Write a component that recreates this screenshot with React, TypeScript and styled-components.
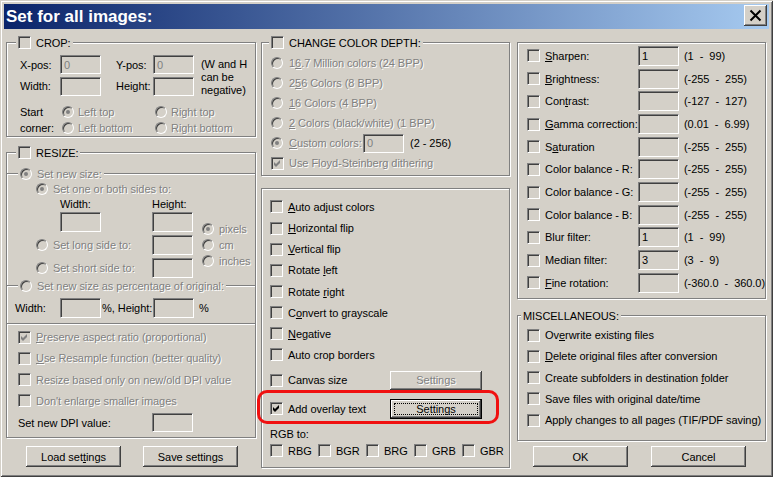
import React from "react";
import styled, { createGlobalStyle } from "styled-components";

const FACE = "#d4d0c8";

const GlobalStyle = createGlobalStyle`
  html, body { margin: 0; padding: 0; background: ${FACE}; }
  body {
    font-family: "Liberation Sans", Arial, sans-serif;
    font-size: 11px;
    letter-spacing: -0.05px;
    color: #000;
  }
  * { box-sizing: border-box; }
`;

const Window = styled.div`
  width: 773px;
  height: 477px;
  padding: 4px;
  background: ${FACE};
  box-shadow: inset 1px 1px 0 ${FACE}, inset -1px -1px 0 #404040,
    inset 2px 2px 0 #fff, inset -2px -2px 0 #808080;
  display: flex;
  flex-direction: column;
  overflow: hidden;
`;

const TitleBar = styled.div`
  height: 25px;
  flex: none;
  display: flex;
  align-items: center;
  justify-content: space-between;
  padding: 0 2px 0 2px;
  background: linear-gradient(to right, #0a246a, #a6caf0);
`;

const Title = styled.div`
  color: #fff;
  font-size: 17px;
  font-weight: bold;
  letter-spacing: 0;
  white-space: nowrap;
`;

const CloseButton = styled.div`
  width: 23px;
  height: 21px;
  align-self: flex-start;
  margin-top: 1px;
  display: flex;
  align-items: center;
  justify-content: center;
  background: ${FACE};
  box-shadow: inset -1px -1px 0 #404040, inset 1px 1px 0 #fff,
    inset -2px -2px 0 #808080;
`;

const Client = styled.div`
  flex: 1;
  display: flex;
  padding: 13px 3px 0 2px;
`;

const Column = styled.div<{ $w: number; $ml?: number }>`
  width: ${(p) => p.$w}px;
  margin-left: ${(p) => p.$ml ?? 0}px;
  flex: none;
  display: flex;
  flex-direction: column;
`;

const Group = styled.div<{ $h: number; $mt?: number }>`
  position: relative;
  height: ${(p) => p.$h}px;
  margin-top: ${(p) => p.$mt ?? 0}px;
  flex: none;
  border: 1px solid #808080;
  box-shadow: inset 1px 1px 0 #fff, 1px 1px 0 #fff;
`;

const Legend = styled.div<{ $left: number }>`
  position: absolute;
  top: -7px;
  left: ${(p) => p.$left}px;
  height: 13px;
  padding: 0 2px;
  display: flex;
  align-items: center;
  gap: 5px;
  background: ${FACE};
  white-space: nowrap;
`;

const Frame = styled.div<{ $h: number; $mt?: number; $closed?: boolean }>`
  position: relative;
  height: ${(p) => p.$h}px;
  margin-top: ${(p) => p.$mt ?? 0}px;
  flex: none;
  border-top: 1px solid #808080;
  border-bottom: ${(p) => (p.$closed ? "1px solid #808080" : "none")};
  box-shadow: inset 0 1px 0 #fff
    ${(p) => (p.$closed ? ", 0 1px 0 #fff" : "")};
`;

const Txt = styled.span<{ $dis?: boolean }>`
  white-space: pre;
  color: ${(p) => (p.$dis ? "#808080" : "#000")};
  text-shadow: ${(p) => (p.$dis ? "1px 1px 0 #fff" : "none")};
`;

const Box = styled.span`
  width: 13px;
  height: 13px;
  flex: none;
  display: inline-flex;
  align-items: center;
  justify-content: center;
  background: ${FACE};
  border: 1px solid;
  border-color: #808080 #fff #fff #808080;
  box-shadow: inset 1px 1px 0 #404040, inset -1px -1px 0 ${FACE};
`;

const Round = styled.span<{ $on?: boolean }>`
  position: relative;
  width: 12px;
  height: 12px;
  flex: none;
  border-radius: 50%;
  background: ${FACE};
  border: 1px solid;
  border-color: #808080 #fff #fff #808080;
  box-shadow: inset 1px 1px 0 #404040;

  &::after {
    content: "";
    display: ${(p) => (p.$on ? "block" : "none")};
    position: absolute;
    left: 3px;
    top: 3px;
    width: 4px;
    height: 4px;
    border-radius: 50%;
    background: #808080;
  }
`;

const Field = styled.div<{ $w?: number; $h?: number; $dis?: boolean }>`
  width: ${(p) => p.$w ?? 41}px;
  height: ${(p) => p.$h ?? 19}px;
  flex: none;
  display: flex;
  align-items: center;
  padding-left: 3px;
  background: ${FACE};
  border: 1px solid;
  border-color: #808080 #fff #fff #808080;
  box-shadow: inset 1px 1px 0 #404040, inset -1px -1px 0 ${FACE};
  color: ${(p) => (p.$dis ? "#808080" : "#000")};
`;

const Opt = styled.div<{ $gap?: number }>`
  display: inline-flex;
  align-items: center;
  gap: ${(p) => p.$gap ?? 5}px;
  white-space: nowrap;
`;

const Stack = styled.div<{ $pt: number; $pl: number }>`
  display: flex;
  flex-direction: column;
  padding: ${(p) => p.$pt}px 0 0 ${(p) => p.$pl}px;
`;

const Line = styled.div<{ $h: number; $pl?: number }>`
  height: ${(p) => p.$h}px;
  flex: none;
  display: flex;
  align-items: center;
  padding-left: ${(p) => p.$pl ?? 0}px;
  white-space: nowrap;
`;

const Label = styled.span<{ $w: number; $pl?: number; $dis?: boolean }>`
  width: ${(p) => p.$w}px;
  padding-left: ${(p) => p.$pl ?? 0}px;
  flex: none;
  white-space: pre;
  color: ${(p) => (p.$dis ? "#808080" : "#000")};
  text-shadow: ${(p) => (p.$dis ? "1px 1px 0 #fff" : "none")};
`;

const Cell = styled.div<{ $c: string; $r: string; $pl?: number }>`
  grid-column: ${(p) => p.$c};
  grid-row: ${(p) => p.$r};
  display: flex;
  align-items: center;
  padding-left: ${(p) => p.$pl ?? 0}px;
  white-space: nowrap;
`;

const Note = styled.div<{ $c: string; $r: string; $lh: number; $mt?: number }>`
  grid-column: ${(p) => p.$c};
  grid-row: ${(p) => p.$r};
  align-self: start;
  margin-top: ${(p) => p.$mt ?? 0}px;
  line-height: ${(p) => p.$lh}px;
  white-space: nowrap;
`;

const CropGrid = styled.div`
  display: grid;
  grid-template-columns: 40px 56px 37px 48px 1fr;
  grid-template-rows: 21px 22px 7px 16px 16px;
  padding: 11px 0 0 13px;
`;

const SizeGrid = styled.div`
  display: grid;
  grid-template-columns: 29px 24px 92px 50px 1fr;
  grid-template-rows: 16px 14px 22px 24px 21px;
  padding-top: 7px;
`;

const UnitList = styled.div`
  grid-column: 5;
  grid-row: 3 / 6;
  display: flex;
  flex-direction: column;
  padding-top: 10px;
`;

const FilterGrid = styled.div`
  display: grid;
  grid-template-columns: 18px 93px 46px 1fr;
  grid-auto-rows: 22.7px;
  align-items: center;
  padding: 1.65px 0 0 9px;
  white-space: pre;
`;

const ButtonRow = styled.div<{ $mt: number; $gap: number; $shift?: number }>`
  margin-top: ${(p) => p.$mt}px;
  display: flex;
  justify-content: center;
  gap: ${(p) => p.$gap}px;
  transform: translateX(${(p) => p.$shift ?? 0}px);
`;

const Btn = styled.div<{ $w: number; $h: number; $default?: boolean; $dis?: boolean }>`
  position: relative;
  width: ${(p) => p.$w}px;
  height: ${(p) => p.$h}px;
  flex: none;
  display: flex;
  align-items: center;
  justify-content: center;
  background: ${FACE};
  color: ${(p) => (p.$dis ? "#808080" : "#000")};
  text-shadow: ${(p) => (p.$dis ? "1px 1px 0 #fff" : "none")};
  white-space: nowrap;
  box-shadow: ${(p) =>
    p.$default
      ? "inset 0 0 0 1px #000, inset -2px -2px 0 #404040, inset 2px 2px 0 #fff, inset -3px -3px 0 #808080"
      : "inset -1px -1px 0 #404040, inset 1px 1px 0 #fff, inset -2px -2px 0 #808080"};

  &::after {
    content: "";
    display: ${(p) => (p.$default ? "block" : "none")};
    position: absolute;
    inset: 4px;
    border: 1px dotted #000;
  }
`;

const RgbItem = styled.div`
  width: 48px;
  flex: none;
  display: flex;
  align-items: center;
  gap: 5px;
`;

const Highlight = styled.div`
  position: absolute;
  left: -5px;
  top: 201px;
  width: 242px;
  height: 34px;
  border: 3px solid #f01010;
  border-radius: 10px;
  pointer-events: none;
`;

const Tick = ({ dis }: { dis?: boolean }) => (
  <svg width="7" height="7" viewBox="0 0 7 7">
    <path d="M0 2 L2 4 L6 0 L6 3 L2 7 L0 5 Z" fill={dis ? "#808080" : "#000"} />
  </svg>
);

const Check = ({ on, dis }: { on?: boolean; dis?: boolean }) => (
  <Box>{on && <Tick dis={dis} />}</Box>
);

const filters: [React.ReactNode, string, string][] = [
  [<><u>S</u>harpen:</>, "1", "(1  -  99)"],
  [<><u>B</u>rightness:</>, "", "(-255  -  255)"],
  [<>Con<u>t</u>rast:</>, "", "(-127  -  127)"],
  [<><u>G</u>amma correction:</>, "", "(0.01  -  6.99)"],
  [<>S<u>a</u>turation</>, "", "(-255  -  255)"],
  [<>Color balance - R:</>, "", "(-255  -  255)"],
  [<>Color balance - G:</>, "", "(-255  -  255)"],
  [<>Color balance - B:</>, "", "(-255  -  255)"],
  [<>Blur filter:</>, "1", "(1  -  99)"],
  [<>Median filter:</>, "3", "(3  -  9)"],
  [<><u>F</u>ine rotation:</>, "", "(-360.0  -  360.0)"],
];

const misc: React.ReactNode[] = [
  <>Ov<u>e</u>rwrite existing files</>,
  <><u>D</u>elete original files after conversion</>,
  <>Create subfolders in destination <u>f</u>older</>,
  <>Save files with original date/time</>,
  <>Apply changes to all pages (TIF/PDF saving)</>,
];

const transforms: React.ReactNode[] = [
  <><u>A</u>uto adjust colors</>,
  <><u>H</u>orizontal flip</>,
  <><u>V</u>ertical flip</>,
  <>Rotate <u>l</u>eft</>,
  <>Rotate <u>r</u>ight</>,
  <>C<u>o</u>nvert to grayscale</>,
  <><u>N</u>egative</>,
  <>Auto crop borders</>,
];

const depths: React.ReactNode[] = [
  <>1<u>6</u>.7 Million colors (24 BPP)</>,
  <>2<u>5</u>6 Colors (8 BPP)</>,
  <><u>1</u>6 Colors (4 BPP)</>,
  <><u>2</u> Colors (black/white) (1 BPP)</>,
];

const resizeChecks: [React.ReactNode, boolean][] = [
  [<><u>P</u>reserve aspect ratio (proportional)</>, true],
  [<><u>U</u>se Resample function (better quality)</>, false],
  [<>Resize based only on new/old DPI value</>, false],
  [<>Don't enlarge smaller images</>, false],
];

function App() {
  return (
    <>
      <GlobalStyle />
      <Window>
        <TitleBar>
          <Title>Set for all images:</Title>
          <CloseButton>
            <svg width="13" height="13" viewBox="0 0 13 13">
              <path d="M1.5 1.5 L11.5 11.5 M11.5 1.5 L1.5 11.5" stroke="#000" strokeWidth="2" />
            </svg>
          </CloseButton>
        </TitleBar>

        <Client>
          {/* left column */}
          <Column $w={250}>
            <Group $h={95}>
              <Legend $left={9}>
                <Check />
                <Txt>CROP:</Txt>
              </Legend>
              <CropGrid>
                <Cell $c="1" $r="1">X-pos:</Cell>
                <Cell $c="2" $r="1"><Field $dis>0</Field></Cell>
                <Cell $c="3" $r="1">Y-pos:</Cell>
                <Cell $c="4" $r="1"><Field $dis>0</Field></Cell>
                <Note $c="5" $r="1 / 3" $lh={13} $mt={4}>
                  (W and H<br />can be<br />negative)
                </Note>
                <Cell $c="1" $r="2">Width:</Cell>
                <Cell $c="2" $r="2"><Field /></Cell>
                <Cell $c="3" $r="2">Height:</Cell>
                <Cell $c="4" $r="2"><Field /></Cell>
                <Note $c="1" $r="4 / 6" $lh={16}>
                  Start<br />corner:
                </Note>
                <Cell $c="2 / 4" $r="4" $pl={2}>
                  <Opt $gap={4}><Round $on /><Txt $dis>Left top</Txt></Opt>
                </Cell>
                <Cell $c="4 / 6" $r="4" $pl={2}>
                  <Opt $gap={4}><Round /><Txt $dis>Right top</Txt></Opt>
                </Cell>
                <Cell $c="2 / 4" $r="5" $pl={2}>
                  <Opt $gap={4}><Round /><Txt $dis>Left bottom</Txt></Opt>
                </Cell>
                <Cell $c="4 / 6" $r="5" $pl={2}>
                  <Opt $gap={4}><Round /><Txt $dis>Right bottom</Txt></Opt>
                </Cell>
              </CropGrid>
            </Group>

            <Group $h={286} $mt={15}>
              <Legend $left={9}>
                <Check />
                <Txt>RESIZE:</Txt>
              </Legend>
              <Frame $h={112} $mt={20}>
                <Legend $left={11}>
                  <Round $on />
                  <Txt $dis>Set new size:</Txt>
                </Legend>
                <SizeGrid>
                  <Cell $c="2 / 6" $r="1">
                    <Opt><Round $on /><Txt $dis>Set one or both sides to:</Txt></Opt>
                  </Cell>
                  <Cell $c="3" $r="2">Width:</Cell>
                  <Cell $c="4" $r="2">Height:</Cell>
                  <Cell $c="3" $r="3"><Field $h={20} /></Cell>
                  <Cell $c="4" $r="3"><Field $h={20} /></Cell>
                  <Cell $c="2 / 4" $r="4">
                    <Opt><Round /><Txt $dis>Set long side to:</Txt></Opt>
                  </Cell>
                  <Cell $c="4" $r="4"><Field $h={20} /></Cell>
                  <Cell $c="2 / 4" $r="5">
                    <Opt><Round /><Txt $dis>Set short side to:</Txt></Opt>
                  </Cell>
                  <Cell $c="4" $r="5"><Field $h={20} /></Cell>
                  <UnitList>
                    <Line $h={16}><Opt><Round $on /><Txt $dis>pixels</Txt></Opt></Line>
                    <Line $h={16}><Opt><Round /><Txt $dis>cm</Txt></Opt></Line>
                    <Line $h={16}><Opt><Round /><Txt $dis>inches</Txt></Opt></Line>
                  </UnitList>
                </SizeGrid>
              </Frame>
              <Frame $h={39} $closed>
                <Legend $left={11}>
                  <Round />
                  <Txt $dis>Set new size as percentage of original:</Txt>
                </Legend>
                <Stack $pt={12} $pl={8}>
                  <Line $h={20}>
                    <Label $w={45}>Width:</Label>
                    <Field $h={20} />
                    <Label $w={52} $pl={1}>%, Height:</Label>
                    <Field $h={20} />
                    <Label $w={20} $pl={5}>%</Label>
                  </Line>
                </Stack>
              </Frame>
              <Stack $pt={2.4} $pl={11}>
                {resizeChecks.map(([text, on], i) => (
                  <Line $h={21.3} key={i}>
                    <Opt><Check on={on} dis /><Txt $dis>{text}</Txt></Opt>
                  </Line>
                ))}
                <Line $h={22}>
                  <Label $w={134}>Set new DPI value:</Label>
                  <Field />
                </Line>
              </Stack>
            </Group>

            <ButtonRow $mt={8} $gap={22} $shift={1}>
              <Btn $w={95} $h={21}>Load set<u>t</u>ings</Btn>
              <Btn $w={95} $h={21}>Save settings</Btn>
            </ButtonRow>
          </Column>

          {/* middle column */}
          <Column $w={249} $ml={5}>
            <Group $h={134}>
              <Legend $left={7}>
                <Check />
                <Txt>CHANGE COLOR DEPTH:</Txt>
              </Legend>
              <Stack $pt={10} $pl={9}>
                {depths.map((d, i) => (
                  <Line $h={20} key={i}>
                    <Opt $gap={6}><Round /><Txt $dis>{d}</Txt></Opt>
                  </Line>
                ))}
                <Line $h={20}>
                  <Opt $gap={6}>
                    <Round $on />
                    <Label $w={74} $dis><u>C</u>ustom colors:</Label>
                  </Opt>
                  <Field $dis>0</Field>
                  <Txt>  (2 - 256)</Txt>
                </Line>
                <Line $h={20}>
                  <Opt><Check on dis /><Txt $dis>Use Floyd-Steinberg dithering</Txt></Opt>
                </Line>
              </Stack>
            </Group>

            <Group $h={280} $mt={12}>
              <Stack $pt={7.4} $pl={8}>
                {transforms.map((t, i) => (
                  <Line $h={21.15} key={i}>
                    <Opt><Check /><Txt>{t}</Txt></Opt>
                  </Line>
                ))}
                <Line $h={29.4}>
                  <Opt><Check /><Label $w={102}>Canvas size</Label></Opt>
                  <Btn $w={92} $h={19} $dis>Settings</Btn>
                </Line>
                <Line $h={28}>
                  <Opt><Check on /><Label $w={102}>Add overlay text</Label></Opt>
                  <Btn $w={92} $h={20} $default>Settings</Btn>
                </Line>
                <Line $h={22}>RGB to:</Line>
                <Line $h={12}>
                  {["RBG", "BGR", "BRG", "GRB", "GBR"].map((c) => (
                    <RgbItem key={c}><Check /><Txt>{c}</Txt></RgbItem>
                  ))}
                </Line>
              </Stack>
              <Highlight />
            </Group>
          </Column>

          {/* right column */}
          <Column $w={249} $ml={7}>
            <Group $h={257}>
              <FilterGrid>
                {filters.map(([label, value, range], i) => (
                  <React.Fragment key={i}>
                    <Check />
                    <span>{label}</span>
                    <Field $h={20}>{value}</Field>
                    <span>{range}</span>
                  </React.Fragment>
                ))}
              </FilterGrid>
            </Group>

            <Group $h={126} $mt={16}>
              <Legend $left={3}>
                <Txt>MISCELLANEOUS:</Txt>
              </Legend>
              <Stack $pt={8.4} $pl={9}>
                {misc.map((m, i) => (
                  <Line $h={21.25} key={i}>
                    <Opt><Check /><Txt>{m}</Txt></Opt>
                  </Line>
                ))}
              </Stack>
            </Group>

            <ButtonRow $mt={5} $gap={23} $shift={-2}>
              <Btn $w={95} $h={21}>OK</Btn>
              <Btn $w={95} $h={21}>Cancel</Btn>
            </ButtonRow>
          </Column>
        </Client>
      </Window>
    </>
  );
}

export default App;
